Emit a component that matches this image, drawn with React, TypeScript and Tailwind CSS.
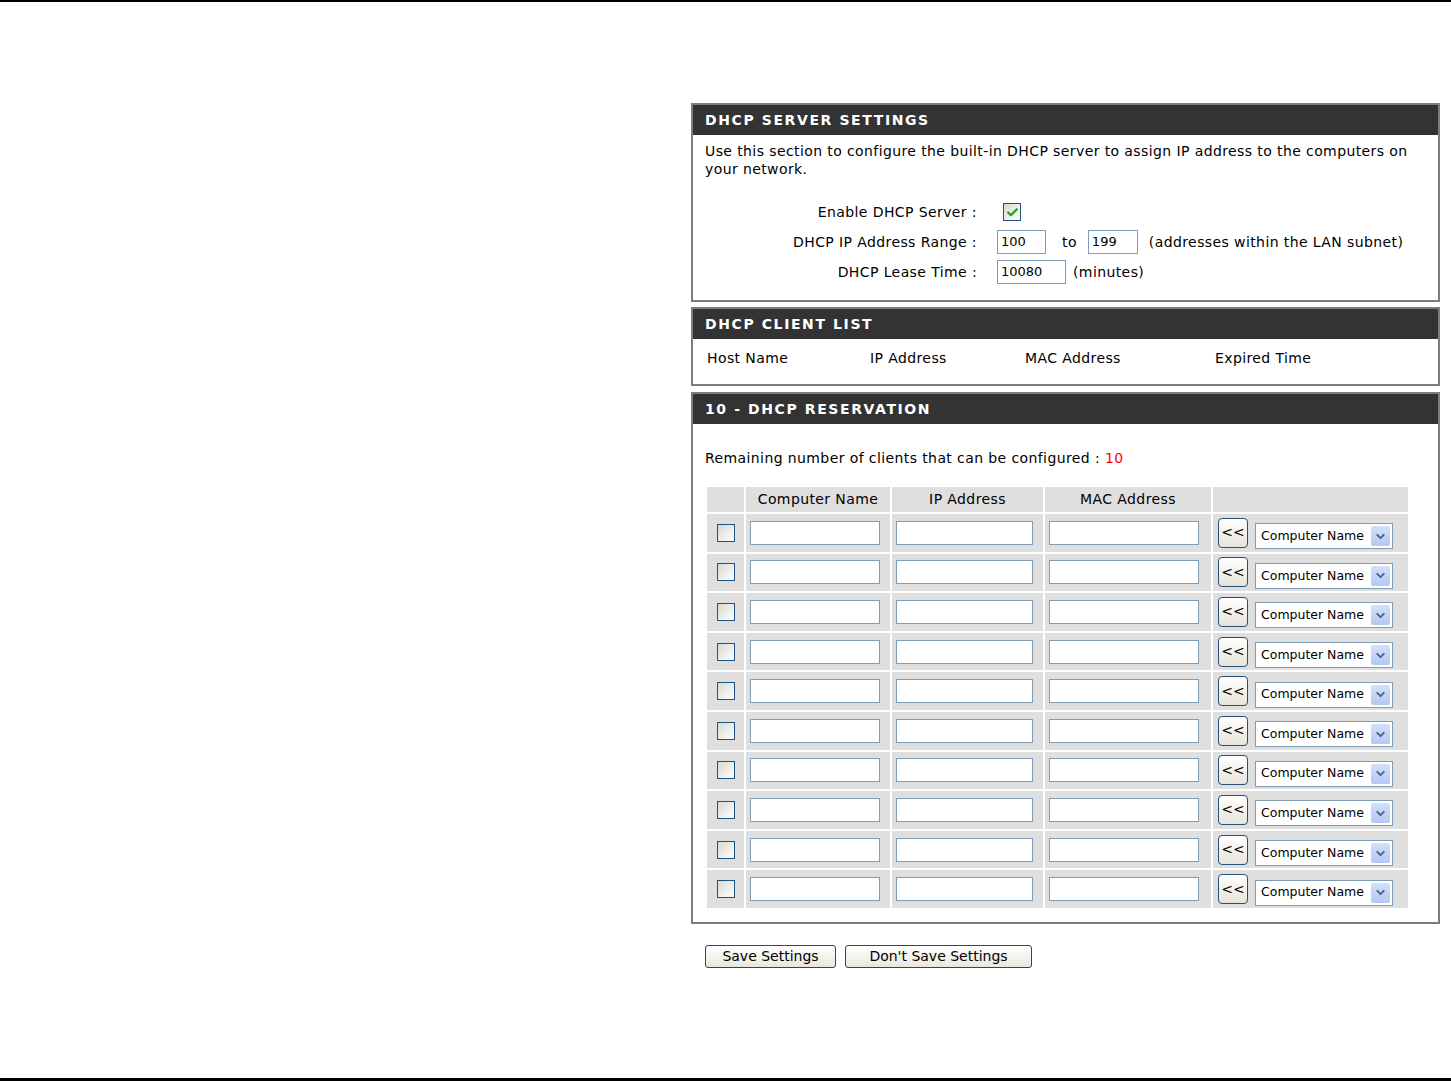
import { Check, ChevronDown } from "lucide-react";

const font = { fontFamily: '"DejaVu Sans", Verdana, sans-serif' };

const rows = Array.from({ length: 10 }, (_, i) => i);

const Panel = ({ title, children }: { title: string; children: React.ReactNode }) => (
  <div className="border-2 border-[#7d7d7d] bg-white">
    <div className="h-[30px] bg-[#333333] pl-[12px] flex items-center">
      <span className="text-white font-bold text-[14px] tracking-[1.6px]">{title}</span>
    </div>
    {children}
  </div>
);

const Box = ({ checked = false }: { checked?: boolean }) => (
  <div className="w-[18px] h-[18px] border border-[#1c5180] bg-gradient-to-br from-[#d8d8d2] to-white flex items-center justify-center">
    {checked && <Check className="w-[13px] h-[13px] text-[#21a121]" strokeWidth={4} />}
  </div>
);

const TextBox = ({ w, value = "" }: { w: string; value?: string }) => (
  <div className={`${w} h-[24px] border border-[#7f9db9] bg-white text-[13px] tracking-normal pl-[3px] flex items-center`}>
    {value}
  </div>
);

const ReservationRow = () => (
  <>
    <div className="bg-[#dfdfdf] h-[37.6px] flex items-center justify-center">
      <Box />
    </div>
    <div className="bg-[#dfdfdf] h-[37.6px] flex items-center pl-[4px]">
      <TextBox w="w-[130px]" />
    </div>
    <div className="bg-[#dfdfdf] h-[37.6px] flex items-center pl-[4px]">
      <TextBox w="w-[137px]" />
    </div>
    <div className="bg-[#dfdfdf] h-[37.6px] flex items-center pl-[4px]">
      <TextBox w="w-[150px]" />
    </div>
    <div className="bg-[#dfdfdf] h-[37.6px] flex items-center pl-[5px] gap-[7px]">
      <div className="w-[30px] h-[30px] rounded-[4px] border border-[#2a4f78] bg-gradient-to-b from-white to-[#e6e4da] flex items-center justify-center text-[14px] tracking-normal">
        &lt;&lt;
      </div>
      <div className="w-[138px] h-[26px] border border-[#7f9db9] bg-white flex items-center justify-between pl-[5px] pr-[2px] mt-[7px]">
        <span className="text-[12.5px] tracking-normal whitespace-nowrap">Computer Name</span>
        <div className="w-[19px] h-[20px] rounded-[2px] bg-gradient-to-b from-[#d3e0fb] to-[#b4c8f4] flex items-center justify-center">
          <ChevronDown className="w-[13px] h-[13px] text-[#4d6185]" strokeWidth={3.5} />
        </div>
      </div>
    </div>
  </>
);

export default function App() {
  return (
    <div style={font} className="h-[1081px] flex flex-col border-t-2 border-b-[3px] border-black text-[14px] tracking-[0.4px] text-black bg-white">
      <div className="pl-[691px] pr-[11px] pt-[101px] flex flex-col">
        <Panel title="DHCP SERVER SETTINGS">
          <div className="pl-[12px] pr-[20px] pt-[7px] leading-[18px]">
            Use this section to configure the built-in DHCP server to assign IP address to the computers on your network.
          </div>
          <div className="mt-[19px] pb-[13px] flex flex-col">
            <div className="h-[30px] flex items-center">
              <div className="w-[304px] text-right pr-[20px]">Enable DHCP Server :</div>
              <div className="pl-[6px]">
                <Box checked />
              </div>
            </div>
            <div className="h-[30px] flex items-center">
              <div className="w-[304px] text-right pr-[20px]">DHCP IP Address Range :</div>
              <TextBox w="w-[49px]" value="100" />
              <span className="ml-[16px]">to</span>
              <div className="ml-[11px]">
                <TextBox w="w-[50px]" value="199" />
              </div>
              <span className="ml-[11px]">(addresses within the LAN subnet)</span>
            </div>
            <div className="h-[30px] flex items-center">
              <div className="w-[304px] text-right pr-[20px]">DHCP Lease Time :</div>
              <TextBox w="w-[69px]" value="10080" />
              <span className="ml-[7px]">(minutes)</span>
            </div>
          </div>
        </Panel>

        <div className="mt-[5px]">
          <Panel title="DHCP CLIENT LIST">
            <div className="grid grid-cols-[163px_155px_190px_1fr] pl-[14px] pt-[10px] pb-[17px] leading-[18px]">
              <span>Host Name</span>
              <span>IP Address</span>
              <span>MAC Address</span>
              <span>Expired Time</span>
            </div>
          </Panel>
        </div>

        <div className="mt-[6px]">
          <Panel title="10 - DHCP RESERVATION">
            <div className="pl-[12px] pt-[25px] leading-[18px]">
              Remaining number of clients that can be configured : <span className="text-[#ff0000]">10</span>
            </div>
            <div className="ml-[14px] mt-[20px] mb-[14px] w-[701px] grid grid-cols-[37px_144px_151px_166px_195px] gap-[2px]">
              <div className="bg-[#dfdfdf] h-[25px]" />
              <div className="bg-[#dfdfdf] h-[25px] flex items-center justify-center">Computer Name</div>
              <div className="bg-[#dfdfdf] h-[25px] flex items-center justify-center">IP Address</div>
              <div className="bg-[#dfdfdf] h-[25px] flex items-center justify-center">MAC Address</div>
              <div className="bg-[#dfdfdf] h-[25px]" />
              {rows.map((r) => (
                <ReservationRow key={r} />
              ))}
            </div>
          </Panel>
        </div>

        <div className="mt-[21px] pl-[14px] flex gap-[9px]">
          <button className="w-[131px] h-[23px] rounded-[3px] border border-[#1d4a7a] bg-gradient-to-b from-white to-[#e9e7dc] text-[14px] tracking-normal leading-none">
            Save Settings
          </button>
          <button className="w-[187px] h-[23px] rounded-[3px] border border-[#1d4a7a] bg-gradient-to-b from-white to-[#e9e7dc] text-[14px] tracking-normal leading-none">
            Don't Save Settings
          </button>
        </div>
      </div>
    </div>
  );
}
